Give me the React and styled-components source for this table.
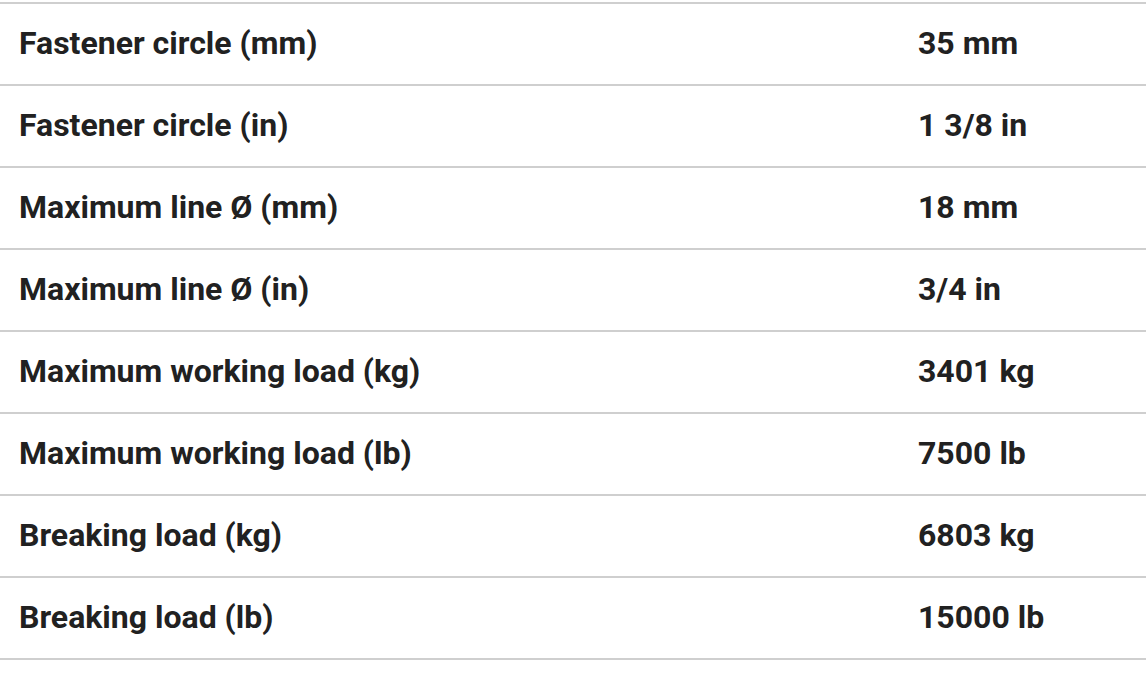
import React from "react";
import styled, { createGlobalStyle } from "styled-components";

const specs = [
  ["Fastener circle (mm)", "35 mm"],
  ["Fastener circle (in)", "1 3/8 in"],
  ["Maximum line Ø (mm)", "18 mm"],
  ["Maximum line Ø (in)", "3/4 in"],
  ["Maximum working load (kg)", "3401 kg"],
  ["Maximum working load (lb)", "7500 lb"],
  ["Breaking load (kg)", "6803 kg"],
  ["Breaking load (lb)", "15000 lb"],
];

const GlobalStyle = createGlobalStyle`
  body {
    margin: 0;
    background: #ffffff;
    font-family: Roboto, "Liberation Sans", sans-serif;
  }
`

const Table = styled.div`
  padding-top: 2px;
`

const Row = styled.div`
  display: grid;
  grid-template-columns: 899px 1fr;
  align-items: center;
  height: 80px;
  border-top: 2px solid #cfcfcf;
  &:last-child {
    border-bottom: 2px solid #cfcfcf;
  }
`

const Cell = styled.div`
  padding: 0 19px;
  font-size: 32px;
  line-height: 38px;
  font-weight: 700;
  color: #212121;
  margin-top: -2px;
`

const App = () => {
  return (
    <>
      <GlobalStyle />
      <Table>
        {specs.map(([label, value]) => (
          <Row key={label}>
            <Cell>{label}</Cell>
            <Cell>{value}</Cell>
          </Row>
        ))}
      </Table>
    </>
  )
}

export default App;
